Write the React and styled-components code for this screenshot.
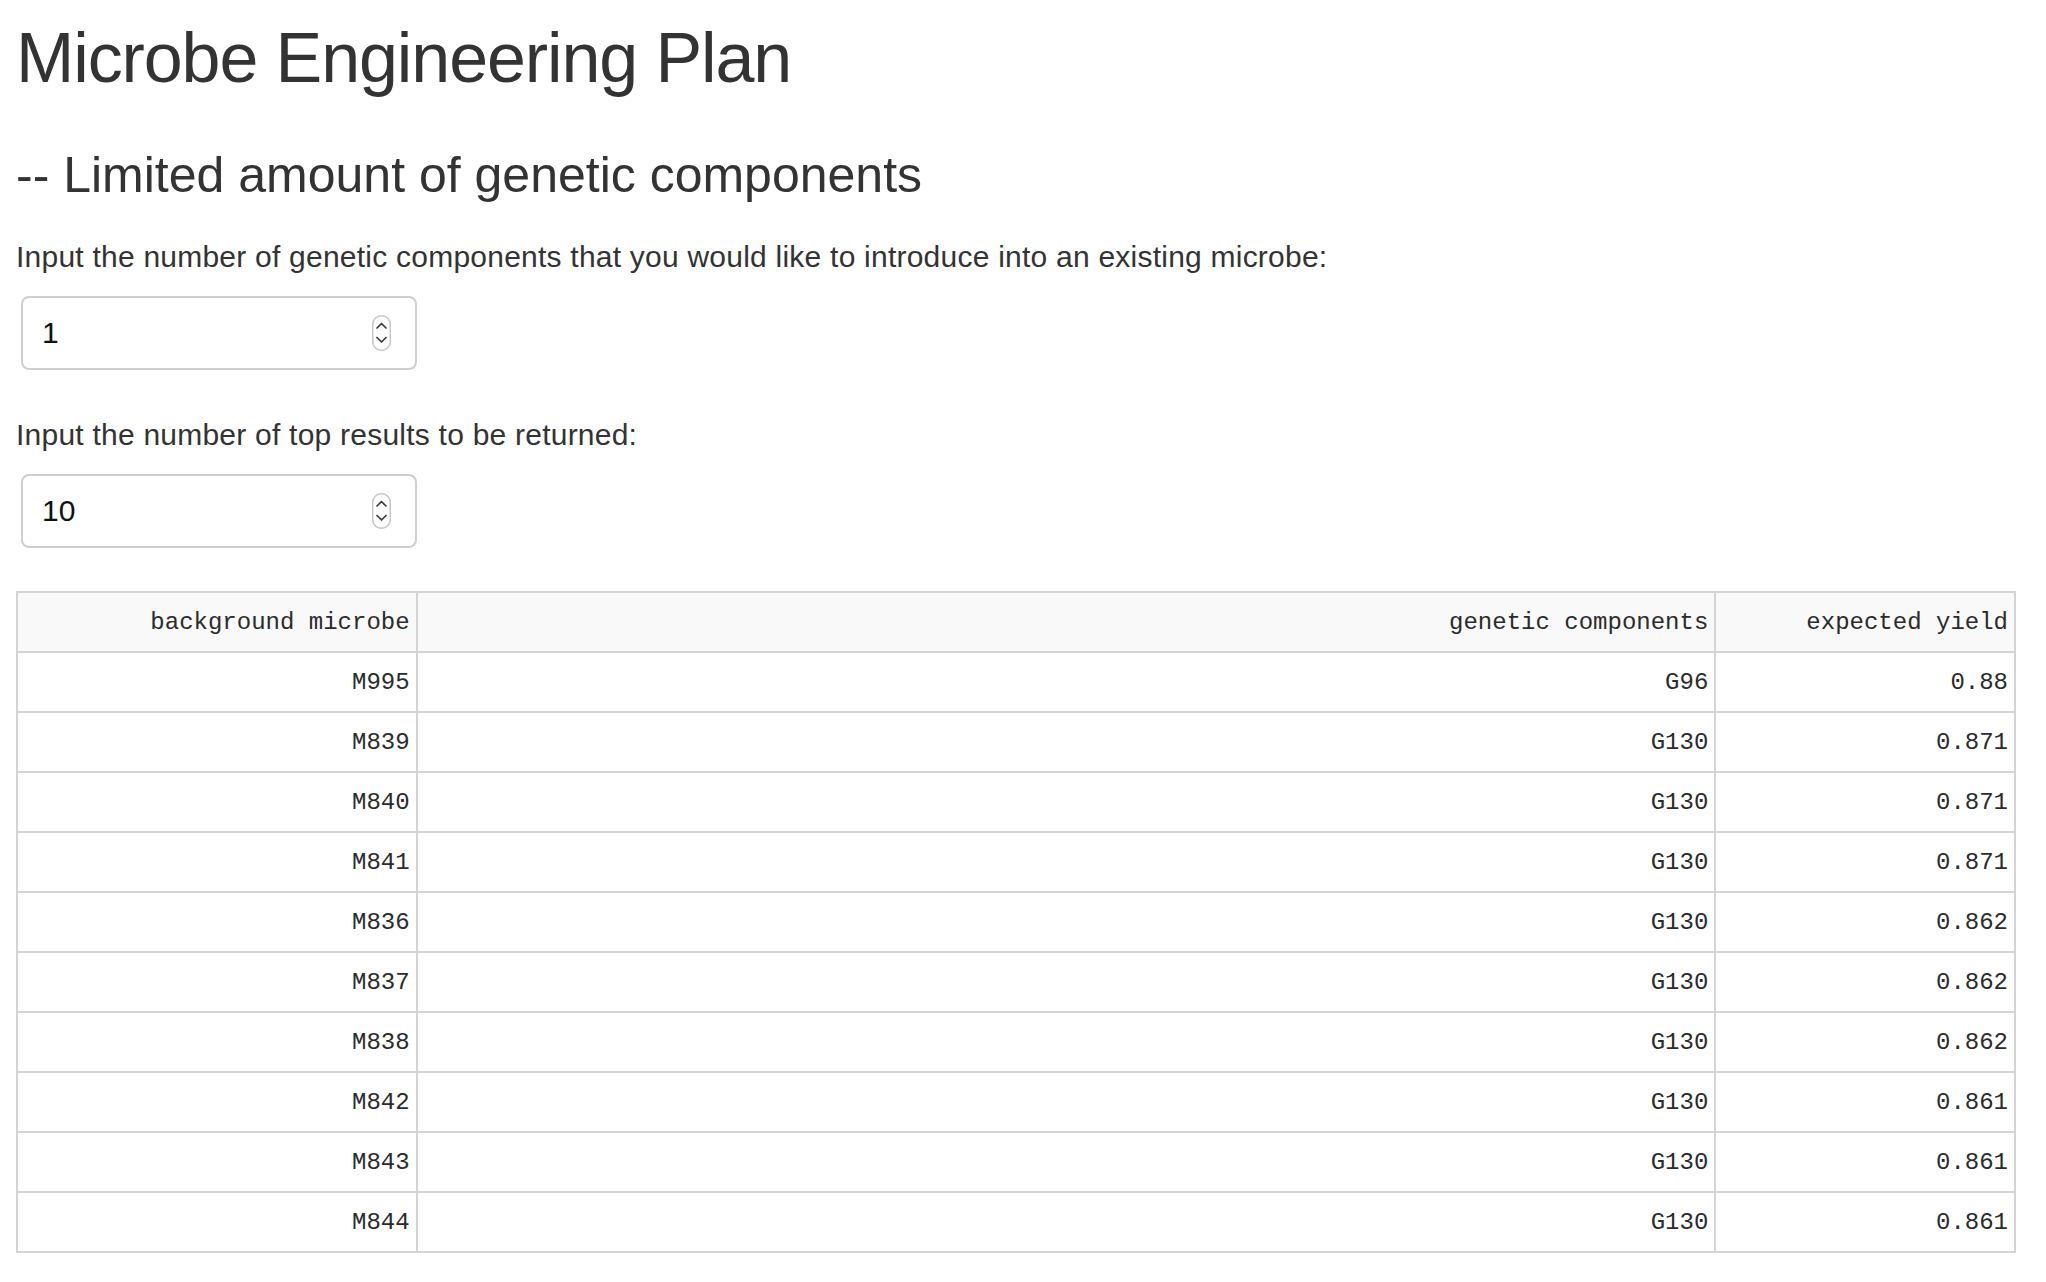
import React from 'react';
import styled, { createGlobalStyle } from 'styled-components';

const rows = [
  ['M995', 'G96', '0.88'],
  ['M839', 'G130', '0.871'],
  ['M840', 'G130', '0.871'],
  ['M841', 'G130', '0.871'],
  ['M836', 'G130', '0.862'],
  ['M837', 'G130', '0.862'],
  ['M838', 'G130', '0.862'],
  ['M842', 'G130', '0.861'],
  ['M843', 'G130', '0.861'],
  ['M844', 'G130', '0.861'],
];

const Stepper = () => (
  <StepperSvg width="19" height="36" viewBox="0 0 19 36">
    <rect x="0.75" y="0.75" width="17.5" height="34.5" rx="8.75" fill="#fff" stroke="#c9c9c9" strokeWidth="1.5" />
    <path d="M5 13 L9.5 8.5 L14 13" fill="none" stroke="#3a3a3a" strokeWidth="1.7" strokeLinecap="round" strokeLinejoin="round" />
    <path d="M5 22.5 L9.5 27 L14 22.5" fill="none" stroke="#3a3a3a" strokeWidth="1.7" strokeLinecap="round" strokeLinejoin="round" />
  </StepperSvg>
);

const NumberField = ({ label, value }) => (
  <Field>
    <Label>{label}</Label>
    <InputBox>
      <Value>{value}</Value>
      <Stepper />
    </InputBox>
  </Field>
);

export default function App() {
  return (
    <Page>
      <GlobalStyle />
      <Title>Microbe Engineering Plan</Title>
      <Subtitle>-- Limited amount of genetic components</Subtitle>
      <NumberField
        label="Input the number of genetic components that you would like to introduce into an existing microbe:"
        value="1"
      />
      <NumberField label="Input the number of top results to be returned:" value="10" />
      <Table>
        <colgroup>
          <col style={{ width: '20%' }} />
          <col />
          <col style={{ width: '15%' }} />
        </colgroup>
        <thead>
          <tr>
            <Th>background microbe</Th>
            <Th>genetic components</Th>
            <Th>expected yield</Th>
          </tr>
        </thead>
        <tbody>
          {rows.map(r => (
            <tr key={r[0]}>
              {r.map((c, i) => (
                <Td key={i}>{c}</Td>
              ))}
            </tr>
          ))}
        </tbody>
      </Table>
    </Page>
  );
}

const GlobalStyle = createGlobalStyle`
  html, body {
    margin: 0;
    padding: 0;
    background: #fff;
  }
  body {
    font-family: "Liberation Sans", Arial, sans-serif;
    color: #333;
  }
`;

const Page = styled.div`
  width: 2000px;
  padding: 20px 0 40px 16px;
`;

const Title = styled.h1`
  margin: 0;
  font-size: 70px;
  line-height: 77px;
  font-weight: 400;
  letter-spacing: -1.1px;
  color: #333;
`;

const Subtitle = styled.h2`
  margin: 51px 0 34px;
  font-size: 50px;
  line-height: 55px;
  font-weight: 400;
  letter-spacing: 0;
  color: #333;
`;

const Field = styled.div`
  display: flex;
  flex-direction: column;
  align-items: flex-start;
  gap: 19px;
  margin-bottom: 45px;

  &:last-of-type {
    margin-bottom: 43px;
  }
`;

const Label = styled.label`
  font-size: 30px;
  line-height: 40px;
  letter-spacing: 0.23px;
  color: #333;
`;

const InputBox = styled.div`
  box-sizing: border-box;
  margin-left: 5px;
  width: 396px;
  height: 74px;
  display: flex;
  align-items: center;
  justify-content: space-between;
  padding: 0 24px 0 19px;
  border: 2px solid #cfcfcf;
  border-radius: 8px;
  background: #fff;
`;

const Value = styled.span`
  font-size: 30px;
  color: #111;
`;

const StepperSvg = styled.svg`
  display: block;
  filter: drop-shadow(0 0.5px 0.5px rgba(0, 0, 0, 0.15));
`;

const Table = styled.table`
  width: 2000px;
  border-collapse: collapse;
  table-layout: fixed;
  border: 2px solid #d4d4d4;
  font-family: "Liberation Mono", "Courier New", monospace;
  font-size: 24px;
  color: #2b2b2b;
`;

const Th = styled.th`
  font-weight: 400;
  text-align: right;
  padding: 18px 6px 16px;
  line-height: 24px;
  background: #f9f9f9;
  border: 2px solid #d4d4d4;
`;

const Td = styled.td`
  text-align: right;
  padding: 18px 6px 16px;
  line-height: 24px;
  border: 2px solid #d4d4d4;
`;
